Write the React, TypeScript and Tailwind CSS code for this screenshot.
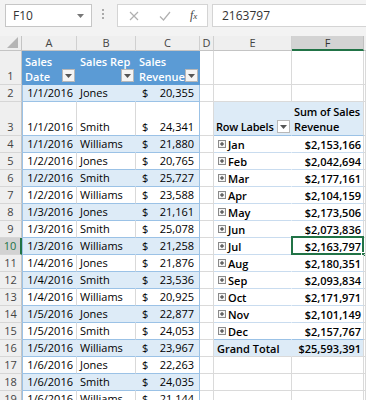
import { ReactNode } from 'react';

const font = "font-['Open_Sans',sans-serif]";

const tableRows: Array<[string, string, string]> = [
    ['1/1/2016', 'Jones', '20,355'],
    ['1/1/2016', 'Smith', '24,341'],
    ['1/1/2016', 'Williams', '21,880'],
    ['1/2/2016', 'Jones', '20,765'],
    ['1/2/2016', 'Smith', '25,727'],
    ['1/2/2016', 'Williams', '23,588'],
    ['1/3/2016', 'Jones', '21,161'],
    ['1/3/2016', 'Smith', '25,078'],
    ['1/3/2016', 'Williams', '21,258'],
    ['1/4/2016', 'Jones', '21,876'],
    ['1/4/2016', 'Smith', '23,536'],
    ['1/4/2016', 'Williams', '20,925'],
    ['1/5/2016', 'Jones', '22,877'],
    ['1/5/2016', 'Smith', '24,053'],
    ['1/5/2016', 'Williams', '23,967'],
    ['1/6/2016', 'Jones', '22,263'],
    ['1/6/2016', 'Smith', '24,035'],
    ['1/6/2016', 'Williams', '21,144'],
];

const pivot: Array<[string, string]> = [
    ['Jan', '$2,153,166'],
    ['Feb', '$2,042,694'],
    ['Mar', '$2,177,161'],
    ['Apr', '$2,104,159'],
    ['May', '$2,173,506'],
    ['Jun', '$2,073,836'],
    ['Jul', '$2,163,797'],
    ['Aug', '$2,180,351'],
    ['Sep', '$2,093,834'],
    ['Oct', '$2,171,971'],
    ['Nov', '$2,101,149'],
    ['Dec', '$2,157,767'],
];

function FilterButton({ className = '' }: { className?: string }) {
    return (
        <div className={`absolute w-[13px] h-[13px] bg-[#f4f4f4] border border-[#b8b8b8] flex items-center justify-center ${className}`}>
            <svg width="7" height="4" viewBox="0 0 7 4">
                <path d="M0 0h7L3.5 4z" fill="#555" />
            </svg>
        </div>
    );
}

function PlusBox() {
    return (
        <svg width="8" height="8" viewBox="0 0 8 8" className="shrink-0">
            <rect x="0.5" y="0.5" width="7" height="7" fill="#f4f4f4" stroke="#8a8a8a" />
            <path d="M2 4h4M4 2v4" stroke="#333" strokeWidth="1" />
        </svg>
    );
}

function RowHeader({ n, h, active }: { n: number; h: string; active?: boolean }) {
    return (
        <div className={`w-[22px] ${h} shrink-0 flex items-end justify-center pb-[1px] text-[11px] border-b border-[#d6d6d6] ${active ? 'bg-[#d2d2d2] text-[#217346] border-r-2 border-r-[#217346]' : 'bg-[#efefef] text-[#444] border-r border-r-[#c4c4c4]'}`}>
            <span className="leading-[15px]">{n}</span>
        </div>
    );
}

function Cell({ w, className = '', children }: { w: string; className?: string; children?: ReactNode }) {
    return <div className={`${w} shrink-0 h-full relative border-r border-b ${className}`}>{children}</div>;
}

function Row({ n, h, active, children }: { n: number; h: string; active?: boolean; children: ReactNode }) {
    return (
        <div className={`flex ${h}`}>
            <RowHeader n={n} h={h} active={active} />
            {children}
        </div>
    );
}

const grid = 'border-[#dadada]';

function TableCells({ i }: { i: number }) {
    const [date, name, rev] = tableRows[i];
    const banded = i % 2 === 0;
    const bg = banded ? 'bg-[#ddebf7] border-r-[#ddebf7]' : 'bg-white border-r-[#d9d9d9]';
    return (
        <>
            <Cell w="w-[55px]" className={`${bg} border-b-[#9bc2e6] shadow-[inset_1px_0_0_#9bc2e6] flex items-end justify-end pr-[3px] pb-[1px]`}>
                {date}
            </Cell>
            <Cell w="w-[59px]" className={`${bg} border-b-[#9bc2e6] flex items-end pl-[3px] pb-[1px]`}>
                {name}
            </Cell>
            <Cell w="w-[64px]" className={`${banded ? 'bg-[#ddebf7]' : 'bg-white'} border-r-[#9bc2e6] border-b-[#9bc2e6] flex items-end justify-between pl-[6px] pr-[5px] pb-[1px]`}>
                <span>$</span>
                <span>{rev}</span>
            </Cell>
        </>
    );
}

function PlainEF() {
    return (
        <>
            <Cell w="w-[78px]" className={grid} />
            <Cell w="w-[72px]" className={grid} />
            <Cell w="flex-1" className={grid} />
        </>
    );
}

export default function App() {
    return (
        <div className={`${font} w-[366px] h-[400px] overflow-hidden bg-white text-[11px] text-black leading-[15px]`}>
            {/* formula bar */}
            <div className="h-[36px] bg-[#f3f3f3] relative">
                <div className="absolute left-[5px] top-[4px] w-[87px] h-[23px] bg-white border border-[#c6c6c6] flex items-center pl-[7px] text-[12px] text-[#333]">
                    F10
                    <svg width="7" height="4" viewBox="0 0 7 4" className="absolute right-[7px] top-[9px]">
                        <path d="M0 0h7L3.5 4z" fill="#777" />
                    </svg>
                </div>
                <div className="absolute left-[102px] top-[9px] flex flex-col gap-[2px]">
                    <div className="w-[2px] h-[2px] bg-[#aaa]" />
                    <div className="w-[2px] h-[2px] bg-[#aaa]" />
                    <div className="w-[2px] h-[2px] bg-[#aaa]" />
                </div>
                <div className="absolute left-[117px] top-[4px] w-[91px] h-[23px] bg-white border border-[#d4d4d4] flex items-center">
                    <svg width="10" height="10" viewBox="0 0 10 10" className="ml-[11px]">
                        <path d="M1 1l8 8M9 1l-8 8" stroke="#b0b0b0" strokeWidth="1.2" />
                    </svg>
                    <svg width="12" height="10" viewBox="0 0 12 10" className="ml-[20px]">
                        <path d="M1 5.5l3.5 3.5L11 1" stroke="#b0b0b0" strokeWidth="1.2" fill="none" />
                    </svg>
                    <span className="ml-[19px] font-['Liberation_Serif',serif] italic text-[12px] text-[#444]">
                        f<span className="text-[9px]">x</span>
                    </span>
                </div>
                <div className="absolute left-[212px] top-[4px] right-0 h-[23px] bg-white border border-r-0 border-[#d4d4d4] flex items-center pl-[9px] text-[12px] text-[#333]">
                    2163797
                </div>
            </div>

            {/* column headers */}
            <div className="flex h-[15px] bg-[#efefef] text-[#444] text-[11px] leading-[14px]">
                <div className="w-[22px] shrink-0 relative border-r border-b border-[#c4c4c4]">
                    <svg width="11" height="11" viewBox="0 0 11 11" className="absolute right-[3px] bottom-[2px]">
                        <path d="M11 0v11H0z" fill="#b5b5b5" />
                    </svg>
                </div>
                {[
                    ['A', 'w-[55px]'],
                    ['B', 'w-[59px]'],
                    ['C', 'w-[64px]'],
                    ['D', 'w-[14px]'],
                    ['E', 'w-[78px]'],
                ].map(([l, w]) => (
                    <div key={l} className={`${w} shrink-0 text-center border-r border-b border-r-[#d0d0d0] border-b-[#c4c4c4]`}>
                        {l}
                    </div>
                ))}
                <div className="w-[72px] shrink-0 text-center bg-[#d3d3d3] border-r border-r-[#c0c0c0] border-b-2 border-b-[#217346] text-[#333]">
                    F
                </div>
                <div className="flex-1 border-b border-b-[#c4c4c4]" />
            </div>

            {/* row 1: table header */}
            <Row n={1} h="h-[34px]">
                <Cell w="w-[55px]" className="bg-[#5b9bd5] border-[#5b9bd5] text-white font-semibold pl-[3px] pt-[3px]">
                    <div>Sales</div>
                    <div>Date</div>
                    <FilterButton className="right-[1px] bottom-[2px]" />
                </Cell>
                <Cell w="w-[59px]" className="bg-[#5b9bd5] border-[#5b9bd5] text-white font-semibold pl-[3px] pt-[3px] whitespace-nowrap">
                    <div>Sales Rep</div>
                    <FilterButton className="right-[1px] bottom-[2px]" />
                </Cell>
                <Cell w="w-[64px]" className="bg-[#5b9bd5] border-[#5b9bd5] text-white font-semibold pl-[3px] pt-[3px] overflow-hidden">
                    <div>Sales</div>
                    <div>Revenue</div>
                    <FilterButton className="right-[1px] bottom-[2px]" />
                </Cell>
                <Cell w="w-[14px]" className={grid} />
                <PlainEF />
            </Row>

            {tableRows.map((_, i) => {
                const n = i + 2;
                const h = n === 3 ? 'h-[34px]' : 'h-[17px]';
                let ef: ReactNode = <PlainEF />;
                if (n === 3) {
                    ef = (
                        <>
                            <Cell w="w-[78px]" className="bg-[#ddebf7] border-r-[#ddebf7] border-b-[#9bc2e6] font-semibold flex items-end pl-[2px] pb-[1px] whitespace-nowrap tracking-[-0.2px]">
                                Row Labels
                                <FilterButton className="right-[1px] bottom-[2px] !bg-white" />
                            </Cell>
                            <Cell w="w-[72px]" className="bg-[#ddebf7] border-r-[#dadada] border-b-[#9bc2e6] font-semibold flex flex-col justify-end pl-[2px] pb-[1px] whitespace-nowrap tracking-[-0.1px]">
                                <div>Sum of Sales</div>
                                <div>Revenue</div>
                            </Cell>
                            <Cell w="flex-1" className={grid} />
                        </>
                    );
                } else if (n >= 4 && n <= 15) {
                    const [m, v] = pivot[n - 4];
                    const last = n === 15;
                    ef = (
                        <>
                            <Cell w="w-[78px]" className={`bg-white border-r-white ${last ? 'border-b-[#9bc2e6]' : 'border-b-[#c9dcef]'} font-semibold flex items-center gap-[2px] pl-[4px]`}>
                                <PlusBox />
                                {m}
                            </Cell>
                            <Cell w="w-[72px]" className={`bg-white border-r-[#dadada] ${last ? 'border-b-[#9bc2e6]' : 'border-b-[#c9dcef]'} font-semibold flex items-center justify-end pr-[2px]`}>
                                {v}
                                {n === 10 && (
                                    <>
                                        <div className="absolute -left-px -top-[2px] -right-px -bottom-px border-2 border-[#217346]" />
                                        <div className="absolute -right-[3px] -bottom-[3px] w-[5px] h-[5px] bg-[#217346] border border-white" />
                                    </>
                                )}
                            </Cell>
                            <Cell w="flex-1" className={grid} />
                        </>
                    );
                } else if (n === 16) {
                    ef = (
                        <>
                            <Cell w="w-[78px]" className="bg-[#ddebf7] border-r-[#ddebf7] border-b-[#dadada] font-semibold flex items-center pl-[3px]">
                                Grand Total
                            </Cell>
                            <Cell w="w-[72px]" className="bg-[#ddebf7] border-r-[#dadada] border-b-[#dadada] font-semibold flex items-center justify-end pr-[2px]">
                                $25,593,391
                            </Cell>
                            <Cell w="flex-1" className={grid} />
                        </>
                    );
                }
                return (
                    <Row key={n} n={n} h={h} active={n === 10}>
                        <TableCells i={i} />
                        <Cell w="w-[14px]" className={grid} />
                        {ef}
                    </Row>
                );
            })}
        </div>
    );
}
